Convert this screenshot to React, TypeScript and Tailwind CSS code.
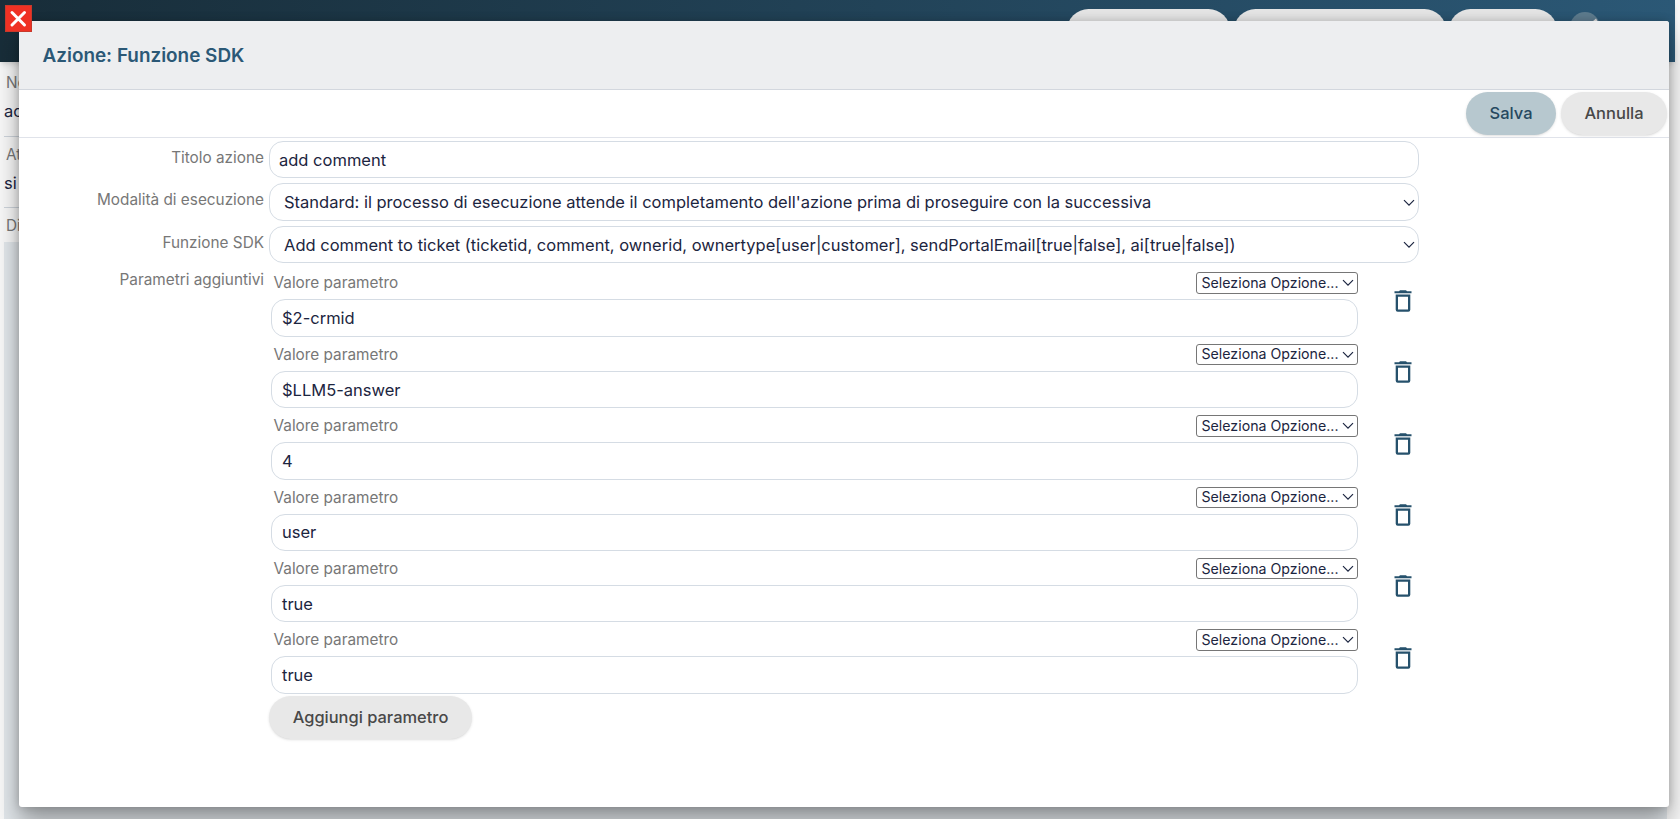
import { useState } from "react";

const initialParams = ["$2-crmid", "$LLM5-answer", "4", "user", "true", "true"];

function Chevron() {
  return (
    <svg viewBox="0 0 12 8" className="h-[8px] w-[12px]" fill="none" stroke="currentColor" strokeWidth="1.2">
      <path d="M1 1.2 6 6.2 11 1.2" />
    </svg>
  );
}

function TrashIcon() {
  return (
    <svg viewBox="0 0 18 22" className="w-[18px] h-[22px]" fill="#26516c">
      <path d="M0.5 1.2H5L6 0.2H12L13 1.2H17.5V3.3H0.5Z" />
      <path fillRule="evenodd" d="M1.7 4.5H16.3V19.8Q16.3 21.8 14.3 21.8H3.7Q1.7 21.8 1.7 19.8ZM4 6.7V19.6H14V6.7Z" />
    </svg>
  );
}

function Row({ label, children }: { label: string; children: React.ReactNode }) {
  return (
    <div className="flex h-[42.5px]">
      <div className="w-[245px] shrink-0 pt-[5px] text-right text-[15.33px] leading-6 text-[#777]">
        {label}
      </div>
      <div className="ml-[5px] flex h-[37.5px] w-[1150.4px] items-center justify-between rounded-[14px] border border-[#d5dce4] pl-[9px] pr-[3px] pt-px text-[16.5px] text-[#1c2540]">
        {children}
      </div>
    </div>
  );
}

function ParamRow({ value }: { value: string }) {
  return (
    <div className="flex h-[71.4px] w-[1150px]">
      <div className="ml-[2px] w-[1087px]">
        <div className="flex h-[30px] items-start justify-between pl-[2.5px] pt-[3px]">
          <span className="text-[15.33px] leading-[21px] text-[#777]">Valore parametro</span>
          <div className="flex h-[21.5px] w-[162.5px] items-center justify-between rounded-[3px] border border-[#767676] pl-[5px] pr-[3px] text-[14.2px] leading-none text-[#1c2540]">
            <span>Seleziona Opzione...</span>
            <Chevron />
          </div>
        </div>
        <div className="flex h-[37.5px] items-center rounded-[14px] border border-[#d5dce4] pl-[10px] pt-px text-[16.5px] text-[#1c2540]">
          {value}
        </div>
      </div>
      <button className="ml-[36px] mt-[20.5px] h-[22px]">
        <TrashIcon />
      </button>
    </div>
  );
}

export default function App() {
  const [params, setParams] = useState(initialParams);

  return (
    <div className="relative h-[819px] w-[1680px] overflow-hidden bg-[#f7f7f7] font-['Inter',sans-serif]">
      {/* Page behind the dialog */}
      <div className="flex h-[62px] w-[1675px] bg-linear-to-r from-[#182d39] to-[#2b5876] pl-[1067px] shadow-md">
        <div className="mt-[9px] h-[43px] w-[163px] rounded-full bg-[#e4e4e4]" />
        <div className="ml-[4px] mt-[9px] h-[43px] w-[212px] rounded-full bg-[#e4e4e4]" />
        <div className="ml-[3px] mt-[9px] h-[43px] w-[108px] rounded-full bg-[#e4e4e4]" />
        <svg viewBox="0 0 30 30" className="ml-[13px] mt-[12px] size-[30px]">
          <circle cx="15" cy="15" r="15" fill="#5d7b8e" />
          <path d="M22 10 26 6.5 28 10Z" fill="#ddd" />
        </svg>
      </div>
      <div className="ml-1 w-[1663px] text-[15.33px] text-[#777]">
        <div className="h-[75px] border-b border-[#cdd3da] pt-[9px]">
          <p className="pl-[2px] leading-6">Nome</p>
          <p className="text-[16.5px] leading-[33px] text-[#1c2540]">add comment</p>
        </div>
        <div className="h-[71px] border-b border-[#cdd3da] pt-[6px]">
          <p className="pl-[2px] leading-6">Attivo</p>
          <p className="text-[16.5px] leading-[32px] text-[#1c2540]">si</p>
        </div>
        <div className="h-[34px] pl-[2px] pt-[6px] leading-6">Di</div>
        <div className="h-[577px] bg-[#e1e6ea]" />
      </div>
      <span className="absolute left-[14px] top-[20px] text-[20px] leading-none text-white">T</span>

      {/* Dialog */}
      <div className="absolute left-[19px] top-[21px] h-[786px] w-[1650px] rounded-[3px] bg-white shadow-[0_16px_24px_rgba(0,0,0,0.33),0_0_10px_rgba(0,0,0,0.2)]">
        <div className="flex h-[69px] items-center rounded-t-[3px] border-b border-[#d3d7de] bg-[#edeef0] pl-[23.5px] pt-[2px] text-[18.9px] font-semibold text-[#2b5876]">
          <h1>Azione: Funzione SDK</h1>
        </div>
        <div className="flex h-[48.3px] items-start justify-end gap-[5px] border-b-[1.5px] border-[#e0e3ea] pr-[2px] pt-[2.1px] text-[16.5px] font-medium">
          <button className="h-[42.5px] w-[90px] rounded-full bg-[#b7c8cf] text-[#26485f] shadow-sm">Salva</button>
          <button className="h-[42.5px] w-[106px] rounded-full bg-[#e8e8e8] text-[#484848] shadow-sm">Annulla</button>
        </div>

        <div className="pt-[2.5px]">
          <Row label="Titolo azione">add comment</Row>
          <Row label="Modalità di esecuzione">
            <span className="pl-[5px]">
              Standard: il processo di esecuzione attende il completamento dell'azione prima di proseguire con la successiva
            </span>
            <Chevron />
          </Row>
          <Row label="Funzione SDK">
            <span className="pl-[5px]">
              Add comment to ticket (ticketid, comment, ownerid, ownertype[user|customer], sendPortalEmail[true|false], ai[true|false])
            </span>
            <Chevron />
          </Row>
          <div className="flex">
            <div className="w-[245px] shrink-0 text-right text-[15.33px] leading-6 text-[#777]">
              Parametri aggiuntivi
            </div>
            <div className="ml-[5px] pt-[1.1px]">
              {params.map((value, i) => (
                <ParamRow key={i} value={value} />
              ))}
              <button
                onClick={() => setParams([...params, ""])}
                className="-mt-[1.4px] block h-[42.5px] w-[203px] rounded-full bg-[#e8e8e8] text-[16.45px] font-medium text-[#484848] shadow-sm"
              >
                Aggiungi parametro
              </button>
            </div>
          </div>
        </div>
      </div>

      {/* Close button over the dialog corner */}
      <button className="absolute left-[5px] top-[5px] size-[27px] border border-[#c8392b] bg-[#ef3124]">
        <svg viewBox="0 0 25 25" className="size-[25px]" stroke="#fff" strokeWidth="3" strokeLinecap="round">
          <path d="M6 6.5 18.5 19M18.5 6.5 6 19" />
        </svg>
      </button>
    </div>
  );
}
